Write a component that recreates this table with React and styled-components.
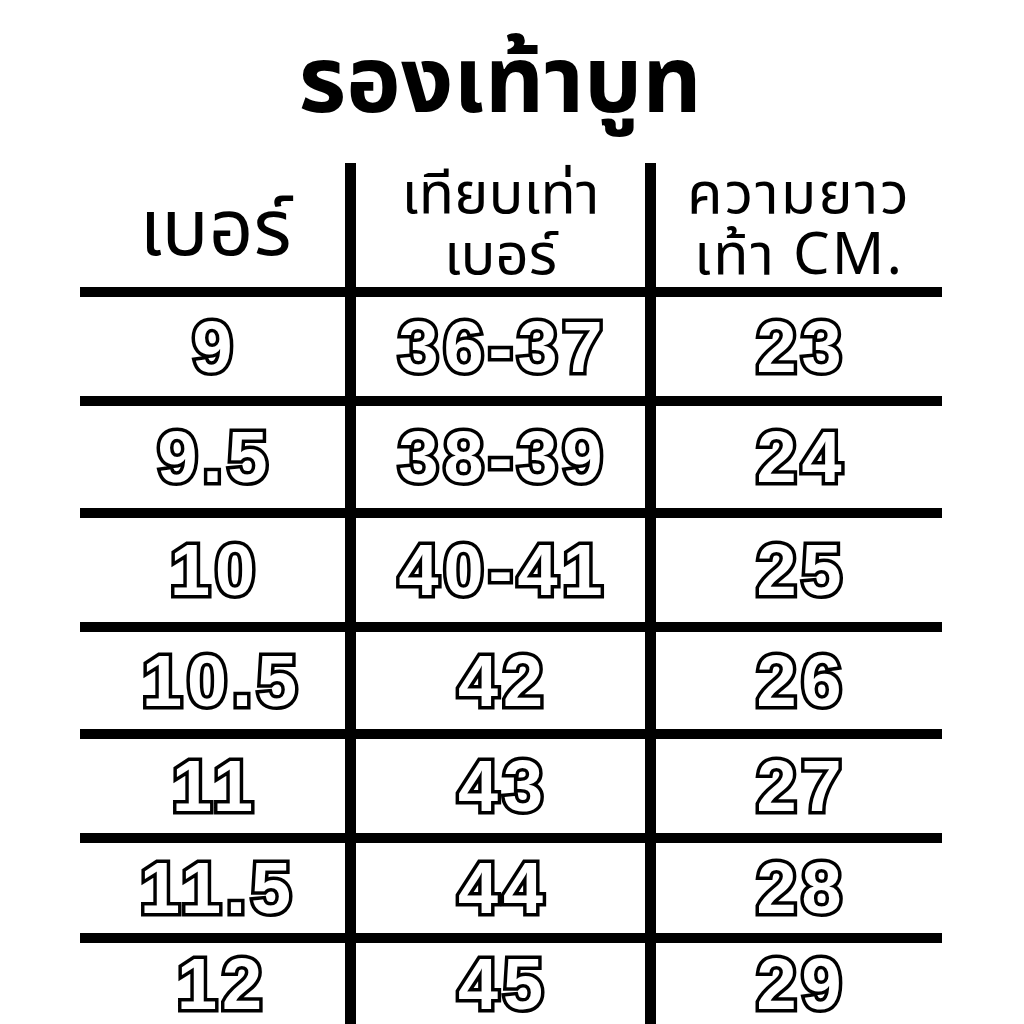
import { Fragment } from 'react';
import styled, { createGlobalStyle } from 'styled-components';

const rows = [
  { size: '9', eu: '36-37', cm: '23', h: 109 },
  { size: '9.5', eu: '38-39', cm: '24', h: 112 },
  { size: '10', eu: '40-41', cm: '25', h: 114 },
  { size: '10.5', eu: '42', cm: '26', h: 107, shift: 14 },
  { size: '11', eu: '43', cm: '27', h: 104 },
  { size: '11.5', eu: '44', cm: '28', h: 100, shift: 6 },
  { size: '12', eu: '45', cm: '29', h: 92, shift: 14 },
];

const GlobalStyle = createGlobalStyle`
  html, body {
    margin: 0;
    padding: 0;
    background: #fff;
  }
  body {
    font-family: "Noto Sans Thai", "Noto Sans", sans-serif;
    color: #000;
  }
`;

const Page = styled.div`
  width: 1024px;
  height: 1024px;
  overflow: hidden;
  background: #fff;
`;

const Title = styled.h1`
  margin: 0;
  height: 163px;
  display: flex;
  align-items: center;
  justify-content: center;
  padding-right: 24px;
  padding-top: 4px;
  box-sizing: border-box;
  font-size: 92px;
  font-weight: 700;
  line-height: 1;
`;

const Table = styled.div`
  display: grid;
  grid-template-columns: 265px 300px 297px;
  margin-left: 80px;
  width: 862px;
`;

const HeadCell = styled.div`
  height: 124px;
  display: flex;
  flex-direction: column;
  align-items: center;
  justify-content: flex-end;
  box-sizing: border-box;
  padding-bottom: ${(p) => (p.$big ? '8px' : '0')};
  padding-left: ${(p) => (p.$big ? '6px' : '0')};
  border-left: ${(p) => (p.$first ? 'none' : '11px solid #000')};
  font-size: ${(p) => (p.$big ? '78px' : '58px')};
  line-height: ${(p) => (p.$big ? '1.2' : '61px')};
  letter-spacing: ${(p) => p.$spread || 0}px;
`;

const Cell = styled.div`
  height: ${(p) => p.$h}px;
  box-sizing: border-box;
  border-top: 10px solid #000;
  border-left: ${(p) => (p.$first ? 'none' : '11px solid #000')};
  display: flex;
  align-items: center;
  justify-content: center;
  padding-left: ${(p) => p.$shift || 0}px;
`;

const Num = styled.span`
  font-family: "Liberation Sans", Arial, sans-serif;
  font-weight: 700;
  font-size: 72px;
  letter-spacing: 5px;
  padding-left: 5px;
  line-height: 1;
  color: #fff;
  -webkit-text-stroke: 7px #000;
  paint-order: stroke fill;
`;

export default function App() {
  return (
    <Page>
      <GlobalStyle />
      <Title>รองเท้าบูท</Title>
      <Table>
        <HeadCell $first $big>
          <span>เบอร์</span>
        </HeadCell>
        <HeadCell>
          <span>เทียบเท่า</span>
          <span>เบอร์</span>
        </HeadCell>
        <HeadCell $spread={2}>
          <span>ความยาว</span>
          <span>เท้า CM.</span>
        </HeadCell>
        {rows.map((r) => (
          <Fragment key={r.size}>
            <Cell $first $h={r.h} $shift={r.shift}>
              <Num>{r.size}</Num>
            </Cell>
            <Cell $h={r.h}>
              <Num>{r.eu}</Num>
            </Cell>
            <Cell $h={r.h}>
              <Num>{r.cm}</Num>
            </Cell>
          </Fragment>
        ))}
      </Table>
    </Page>
  );
}
